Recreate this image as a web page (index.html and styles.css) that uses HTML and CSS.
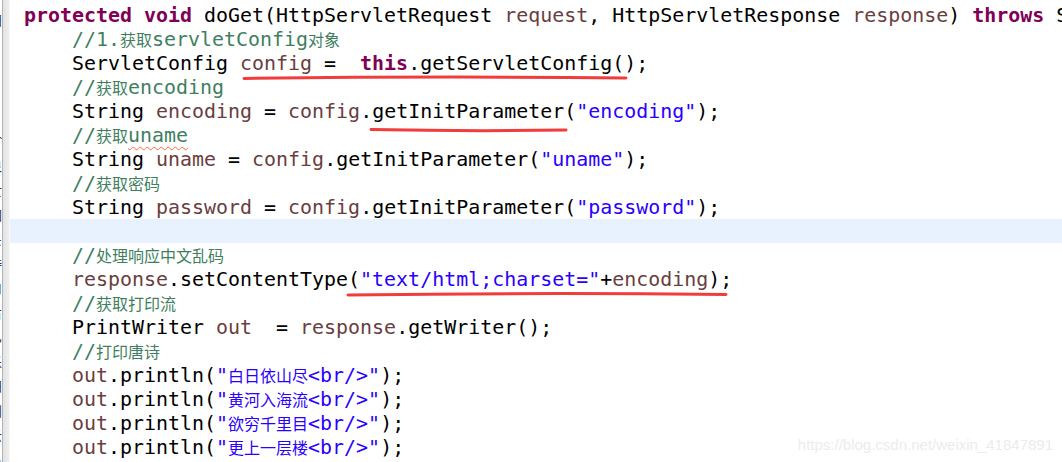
FILE: index.html
```html
<!doctype html>
<html lang="zh">
<head>
	<meta charset="utf-8">
	<title>doGet</title>
	<link rel="stylesheet" href="styles.css">
</head>
<body>
<div class="window">
	<div class="side">
		<div class="side-text">田<br>&nbsp;<br>&nbsp;<br>&nbsp;<br>&nbsp;<br>ˆ<br>泉<br>亡<br>囯<br>モ<br>侍<br>口<br>占<br>乙<br>乐<br>阳<br>钊<br>云<br>卜</div>
	</div>
	<div class="gutter"></div>
	<div class="editor">
		<div class="line"><b class="kw">protected</b> <b class="kw">void</b> doGet(HttpServletRequest <span class="v">request</span>, HttpServletResponse <span class="v">response</span>) <b class="kw">throws</b> ServletException, IOException {</div>
		<div class="line">    <span class="c">//1.<span class="cn">获取</span>servletConfig<span class="cn">对象</span></span></div>
		<div class="line">    ServletConfig <span class="v">config</span> =  <b class="kw">this</b>.getServletConfig();</div>
		<div class="line">    <span class="c">//<span class="cn">获取</span>encoding</span></div>
		<div class="line">    String <span class="v">encoding</span> = <span class="v">config</span>.getInitParameter(<span class="s">"encoding"</span>);</div>
		<div class="line">    <span class="c">//<span class="cn">获取</span><span class="spell">uname</span></span></div>
		<div class="line">    String <span class="v">uname</span> = <span class="v">config</span>.getInitParameter(<span class="s">"uname"</span>);</div>
		<div class="line">    <span class="c">//<span class="cn">获取密码</span></span></div>
		<div class="line">    String <span class="v">password</span> = <span class="v">config</span>.getInitParameter(<span class="s">"password"</span>);</div>
		<div class="line current"> </div>
		<div class="line">    <span class="c">//<span class="cn">处理响应中文乱码</span></span></div>
		<div class="line">    <span class="v">response</span>.setContentType(<span class="s">"text/html;charset="</span>+<span class="v">encoding</span>);</div>
		<div class="line">    <span class="c">//<span class="cn">获取打印流</span></span></div>
		<div class="line">    PrintWriter <span class="v">out</span>  = <span class="v">response</span>.getWriter();</div>
		<div class="line">    <span class="c">//<span class="cn">打印唐诗</span></span></div>
		<div class="line">    <span class="v">out</span>.println(<span class="s">"<span class="cn">白日依山尽</span>&lt;br/&gt;"</span>);</div>
		<div class="line">    <span class="v">out</span>.println(<span class="s">"<span class="cn">黄河入海流</span>&lt;br/&gt;"</span>);</div>
		<div class="line">    <span class="v">out</span>.println(<span class="s">"<span class="cn">欲穷千里目</span>&lt;br/&gt;"</span>);</div>
		<div class="line">    <span class="v">out</span>.println(<span class="s">"<span class="cn">更上一层楼</span>&lt;br/&gt;"</span>);</div>
	</div>

	<!-- hand drawn red marks over the code -->
	<svg class="marks" width="1062" height="462" viewBox="0 0 1062 462">
		<path d="M244 78.5 Q 435 76 626 78" />
		<path d="M371 129.5 Q 470 131.5 566 130" />
		<path d="M348 295 Q 540 292.5 726 294.5" />
	</svg>

	<div class="watermark">https://blog.csdn.net/weixin_41847891</div>
</div>
</body>
</html>
```

FILE: styles.css
```css
html,body{
	margin: 0;
	padding: 0;
	background: #fff;
	overflow: hidden;
}
*{
	box-sizing: border-box;
}
.window{
	position: relative;
	display: flex;
	width: 1062px;
	height: 462px;
	overflow: hidden;
}
	/* cut off panel on the left */
	.side{
		width: 2px;
		overflow: hidden;
		background: #fff;
	}
	.side-text{
		width: 14px;
		margin-left: -12px;
		margin-top: 8px;
		font-family: "Noto Sans CJK SC", sans-serif;
		font-size: 13px;
		line-height: 24.4px;
		color: #333;
		text-align: right;
	}
	.gutter{
		width: 8px;
		border-left: 1px solid #b4b4b4;
		background: linear-gradient(to right, #e2e2e2, #efefef);
		border-right: 1px solid #f6f6f6;
	}
	.editor{
		flex: 1;
		padding: 3px 0 0 0;
		font-family: "DejaVu Sans Mono", "Liberation Mono", monospace;
		font-size: 19.95px;
		color: #000;
		overflow: hidden;
	}
	.line{
		height: 24px;
		line-height: 24px;
		padding-left: 14px;
		white-space: pre;
	}
	.line.current{
		background: #e8f2fe;
	}
	.kw{
		color: #7f0055;
		font-weight: bold;
	}
	.v{
		color: #6a3e3e;
	}
	.s{
		color: #2a00ff;
	}
	.c{
		color: #3f7f5f;
	}
	.cn{
		font-family: "Noto Sans CJK SC", sans-serif;
		font-size: 16px;
		line-height: 1;
	}
	.spell{
		text-decoration: underline wavy #ff6a3a;
		text-decoration-thickness: 1px;
		text-underline-offset: 4px;
	}
	.marks{
		position: absolute;
		left: 0;
		top: 0;
		pointer-events: none;
	}
	.marks path{
		fill: none;
		stroke: #f23c3c;
		stroke-width: 3;
		stroke-linecap: round;
	}
	.watermark{
		position: absolute;
		right: 9px;
		bottom: 9px;
		font-family: "Liberation Sans", Arial, sans-serif;
		font-size: 15px;
		color: #ececec;
	}
```
